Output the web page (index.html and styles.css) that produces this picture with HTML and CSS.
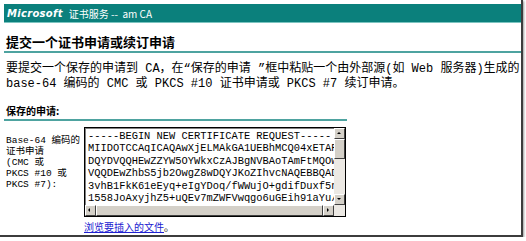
FILE: index.html
```html
<!DOCTYPE html>
<html lang="zh-CN">

<head>
    <meta charset="UTF-8">
    <title>Microsoft 证书服务</title>
    <link rel="stylesheet" href="styles.css">
</head>

<body>
    <div class="window">
        <div class="banner">
            <span class="ms">Microsoft</span>
            <span class="svc">证书服务 --&nbsp;&nbsp;am CA</span>
        </div>

        <h1 class="title">提交一个证书申请或续订申请</h1>

        <p class="intro">要提交一个保存的申请到 CA，在“保存的申请 ”框中粘贴一个由外部源(如 Web 服务器)生成的<br>base-64 编码的 CMC 或 PKCS #10 证书申请或 PKCS #7 续订申请。</p>

        <div class="section">
            <h2 class="sect-title">保存的申请:</h2>
            <div class="req-row">
                <div class="req-label">Base-64 编码的<br>证书申请<br>(CMC 或<br>PKCS #10 或<br>PKCS #7):</div>
                <div class="req-field">
                    <div class="textbox">
                        <pre class="req-text">-----BEGIN NEW CERTIFICATE REQUEST-----
MIIDOTCCAqICAQAwXjELMAkGA1UEBhMCQ04xETAP
DQYDVQQHEwZZYW5OYWkxCzAJBgNVBAoTAmFtMQOw
VQQDEwZhbS5jb2OwgZ8wDQYJKoZIhvcNAQEBBQAD
3vhB1FkK61eEyq+eIgYDoq/fWWujO+gdifDuxf5n
1558JoAxyjhZ5+uQEv7mZWFVwqgo6uGEih91aYu/</pre>
                        <div class="vbar">
                            <div class="btn up"></div>
                            <div class="thumb"></div>
                            <div class="track"></div>
                            <div class="btn down"></div>
                        </div>
                        <div class="hbar">
                            <div class="btn left"></div>
                            <div class="hthumb"></div>
                            <div class="btn right"></div>
                        </div>
                        <div class="corner"></div>
                    </div>
                    <div class="browse"><a href="#">浏览要插入的文件</a>。</div>
                </div>
            </div>
        </div>
    </div>
</body>

</html>
```

FILE: styles.css
```css
body {
    margin: 0;
    background-color: #ffffff;
    font-family: "Noto Sans CJK SC", sans-serif;
    color: #000000;
}

.window {
    width: 517px;
    height: 231px;
    padding: 4px 0 0 4px;
    border-right: 2px solid #3c3c3c;
    border-bottom: 2px solid #3c3c3c;
    box-shadow: 1px 1px 2px #9a9a9a;
    box-sizing: content-box;
    overflow: hidden;
}

.banner {
    height: 18px;
    background-color: #0b807c;
    border-bottom: 1px solid #7cc4c0;
    color: #ffffff;
    display: flex;
    align-items: center;
    gap: 6px;
    padding-left: 3px;
}

.ms {
    font-family: "DejaVu Sans", sans-serif;
    font-weight: bold;
    font-style: italic;
    font-size: 10px;
    letter-spacing: 0.3px;
}

.svc {
    font-size: 10px;
    white-space: pre;
}

.title {
    margin: 10px 0 0 0;
    padding: 0 0 1px 2px;
    font-size: 13px;
    line-height: 17px;
    border-bottom: 2px solid #4ea3a0;
}

.intro {
    margin: 9px 0 0 2px;
    font-family: "Liberation Mono", "Noto Sans CJK SC", monospace;
    font-size: 12px;
    line-height: 15px;
    white-space: nowrap;
}

.section {
    margin-top: 12px;
}

.sect-title {
    width: 341px;
    margin: 0;
    padding: 0 0 1px 2px;
    font-size: 10px;
    line-height: 14px;
    border-bottom: 2px solid #4ea3a0;
}

.req-row {
    display: flex;
    margin-top: 6px;
}

.req-label {
    width: 78px;
    padding: 8px 0 0 2px;
    font-family: "Liberation Mono", "Noto Sans CJK SC", monospace;
    font-size: 9.5px;
    line-height: 11px;
}

.textbox {
    width: 262px;
    height: 90px;
    border: 1px solid #000000;
    box-shadow: inset 1px 1px 0 #808080;
    display: grid;
    grid-template-columns: 1fr 11px;
    grid-template-rows: 1fr 11px;
    box-sizing: border-box;
    background-color: #ffffff;
}

.req-text {
    margin: 0;
    padding: 2px 0 0 3px;
    font-family: "Liberation Mono", monospace;
    font-size: 10.4px;
    line-height: 12.4px;
    overflow: hidden;
}

.vbar {
    display: flex;
    flex-direction: column;
    background-color: #ece9e4;
}

.hbar {
    display: flex;
    background-color: #ece9e4;
}

.corner {
    background-color: #ece9e4;
}

.btn {
    width: 11px;
    height: 11px;
    box-sizing: border-box;
    background-color: #d4d0c8;
    border: 1px solid;
    border-color: #ffffff #404040 #404040 #ffffff;
    position: relative;
}

.btn::after {
    content: "";
    position: absolute;
    left: 2px;
    top: 2px;
    border: 2.5px solid transparent;
}

.up::after {
    top: 1px;
    border-bottom-color: #000000;
}

.down::after {
    top: 3px;
    border-top-color: #000000;
}

.left::after {
    left: 0;
    border-right-color: #000000;
}

.right::after {
    left: 3px;
    border-left-color: #000000;
}

.thumb {
    height: 18px;
    background-color: #d4d0c8;
    border: 1px solid;
    border-color: #ffffff #404040 #404040 #ffffff;
}

.track {
    flex: 1;
}

.hthumb {
    flex: 1;
    background-color: #d4d0c8;
    border: 1px solid;
    border-color: #ffffff #404040 #404040 #ffffff;
}

.browse {
    margin-top: 4px;
    font-size: 10px;
    line-height: 12px;
}

.browse a {
    color: #2020d0;
}
```
